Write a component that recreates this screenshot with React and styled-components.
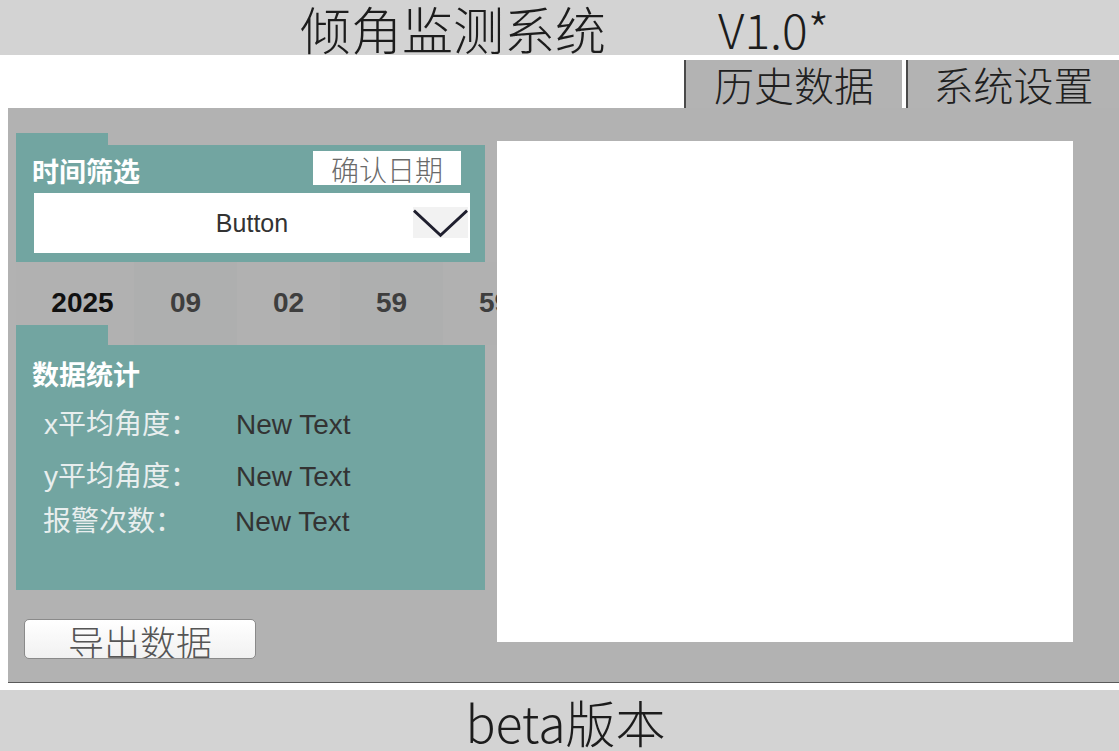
import React from 'react'
import styled, { createGlobalStyle } from 'styled-components'

const GlobalStyle = createGlobalStyle`
  html, body {
    margin: 0;
    padding: 0;
    background: #fff;
    overflow: hidden;
  }
  * {
    box-sizing: border-box;
  }
`

const cjk = `'Noto Sans CJK SC', 'Noto Sans', sans-serif`
const latin = `'Liberation Sans', 'Noto Sans CJK SC', sans-serif`

const Page = styled.div`
  width: 1119px;
  height: 751px;
  display: flex;
  flex-direction: column;
  font-family: ${cjk};
`

const Header = styled.div`
  height: 55px;
  background: #d3d3d3;
  display: flex;
  justify-content: center;
  align-items: center;
  gap: 112px;
  padding-left: 10px;
  font-family: ${cjk};
  font-weight: 300;
  font-size: 51px;
  color: #1c1c1c;
  line-height: 50px;
`

const Version = styled.span`
  font-size: 48px;
`

const TabBar = styled.div`
  height: 53px;
  padding-top: 5px;
  display: flex;
  justify-content: flex-end;
  gap: 4px;
`

const Tab = styled.div`
  width: ${(p) => p.$w}px;
  height: 48px;
  background: #b3b3b3;
  border-left: 2px solid #4a4a4a;
  display: flex;
  align-items: center;
  justify-content: center;
  font-size: 40px;
  font-weight: 300;
  color: #202020;
  line-height: 44px;
`

const Main = styled.div`
  height: 575px;
  margin-left: 8px;
  background: #b2b2b2;
  border-bottom: 1px solid #5a5a5a;
  display: flex;
  padding: 25px 0 0 8px;
`

const LeftCol = styled.div`
  width: 481px;
  display: flex;
  flex-direction: column;
`

const CardTab = styled.div`
  width: 92px;
  height: ${(p) => p.$h}px;
  background: #72a5a1;
  position: relative;
  z-index: 1;
`

const Card = styled.div`
  width: 469px;
  background: #72a5a1;
  display: flex;
  flex-direction: column;
`

const FilterBody = styled(Card)`
  height: 117px;
  padding: 6px 15px 0 18px;
`

const FilterHead = styled.div`
  height: 34px;
  display: flex;
  justify-content: space-between;
  align-items: center;
`

const CardTitle = styled.div`
  color: #fff;
  font-size: 27px;
  font-weight: 700;
  line-height: 1;
  margin-left: ${(p) => p.$ml || 0}px;
  margin-top: ${(p) => p.$mt || 0}px;
`

const ConfirmBtn = styled.div`
  width: 148px;
  height: 34px;
  margin-right: 9px;
  background: #fff;
  color: #6a6a6a;
  font-size: 28px;
  font-weight: 300;
  display: flex;
  align-items: center;
  justify-content: center;
  line-height: 1;
  padding-top: 2px;
`

const Dropdown = styled.div`
  margin-top: 8px;
  height: 60px;
  background: #fff;
  display: flex;
  align-items: center;
  position: relative;
`

const DropLabel = styled.div`
  flex: 1;
  text-align: center;
  font-family: ${latin};
  font-size: 25px;
  color: #333;
`

const Chevron = styled.div`
  position: absolute;
  right: 2px;
  top: 14px;
  width: 55px;
  height: 31px;
  background: #f2f2f2;
  display: flex;
  align-items: flex-start;
  justify-content: center;
`

const DateRow = styled.div`
  width: 481px;
  height: 83px;
  display: flex;
  padding-left: 15px;
  overflow: hidden;
  background: #b1b1b1;
`

const DateCell = styled.div`
  flex: 0 0 103px;
  display: flex;
  align-items: center;
  justify-content: center;
  font-family: ${latin};
  font-weight: 700;
  font-size: 28px;
  color: ${(p) => (p.$active ? '#111' : '#3e3e3e')};
  background: ${(p) => (p.$shade ? '#aeafaf' : 'transparent')};
  padding-bottom: 2px;
`

const StatsWrap = styled.div`
  margin-top: -20px;
  display: flex;
  flex-direction: column;
`

const StatsBody = styled(Card)`
  height: 245px;
  padding: 15px 0 0 16px;
`

const StatRow = styled.div`
  display: flex;
  align-items: center;
  margin-top: ${(p) => p.$mt}px;
  margin-left: ${(p) => p.$ml}px;
  line-height: 1;
`

const StatLabel = styled.div`
  width: 192px;
  color: #e8eeee;
  font-size: 28px;
  font-family: ${latin};
`

const StatValue = styled.div`
  color: #333;
  font-size: 28px;
  font-family: ${latin};
`

const ExportBtn = styled.div`
  margin: 29px 0 0 8px;
  width: 232px;
  height: 40px;
  border: 1px solid #8a8a8a;
  border-radius: 5px;
  background: linear-gradient(#ffffff, #f1f1f1);
  overflow: hidden;
  text-align: center;
  font-size: 36px;
  font-weight: 300;
  color: #555;
  line-height: 1;
  padding-top: 3px;
`

const Chart = styled.div`
  margin-top: 8px;
  width: 576px;
  height: 501px;
  background: #fff;
`

const Spacer = styled.div`
  height: 7px;
  background: #fff;
`

const Footer = styled.div`
  height: 61px;
  background: #d3d3d3;
  display: flex;
  align-items: center;
  justify-content: center;
  padding-left: 12px;
  font-size: 50px;
  font-weight: 300;
  color: #1c1c1c;
  line-height: 56px;
`

const dates = ['2025', '09', '02', '59', '59']

const stats = [
  { label: 'x平均角度：', mt: 24, ml: 12 },
  { label: 'y平均角度：', mt: 24, ml: 12 },
  { label: '报警次数：', mt: 17, ml: 11 },
]

function App() {
  return (
    <Page>
      <GlobalStyle />
      <Header>
        <span>倾角监测系统</span>
        <Version>V1.0*</Version>
      </Header>
      <TabBar>
        <Tab $w={218}>历史数据</Tab>
        <Tab $w={213}>系统设置</Tab>
      </TabBar>
      <Main>
        <LeftCol>
          <CardTab $h={12} />
          <FilterBody>
            <FilterHead>
              <CardTitle $ml={-2} $mt={4}>时间筛选</CardTitle>
              <ConfirmBtn>确认日期</ConfirmBtn>
            </FilterHead>
            <Dropdown>
              <DropLabel>Button</DropLabel>
              <Chevron>
                <svg width="58" height="31" viewBox="0 0 58 31">
                  <path d="M1 3 L29 29 L57 3" fill="none" stroke="#1f1f2e" strokeWidth="3" />
                </svg>
              </Chevron>
            </Dropdown>
          </FilterBody>
          <DateRow>
            {dates.map((d, i) => (
              <DateCell key={i} $active={i === 0} $shade={i % 2 === 1}>
                {d}
              </DateCell>
            ))}
          </DateRow>
          <StatsWrap>
            <CardTab $h={20} />
            <StatsBody>
              <CardTitle>数据统计</CardTitle>
              {stats.map((s) => (
                <StatRow key={s.label} $mt={s.mt} $ml={s.ml}>
                  <StatLabel>{s.label}</StatLabel>
                  <StatValue>New Text</StatValue>
                </StatRow>
              ))}
            </StatsBody>
          </StatsWrap>
          <ExportBtn>导出数据</ExportBtn>
        </LeftCol>
        <Chart />
      </Main>
      <Spacer />
      <Footer>beta版本</Footer>
    </Page>
  )
}

export default App
